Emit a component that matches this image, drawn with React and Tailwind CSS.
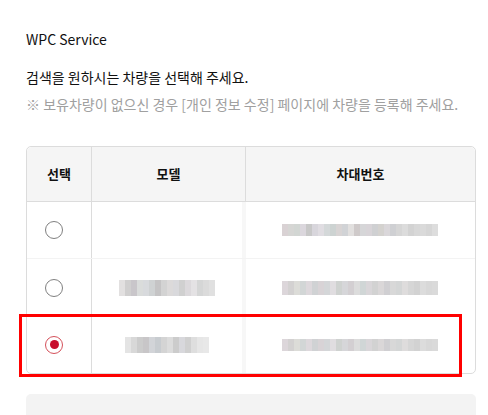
import React from "react";

function Mosaic({ cells, h = "h-[12px]" }) {
  return (
    <div className={`flex ${h}`}>
      {cells.map((c, i) => (
        <div key={i} className={`w-[6px] h-full ${c}`} />
      ))}
    </div>
  );
}

const chassisA = [
  "bg-[#d9d2d4]", "bg-[#d6d6d4]", "bg-[#d2d6d3]", "bg-[#dbd7dd]", "bg-[#c8c8c8]", "bg-[#d8d6dc]", "bg-[#e0dde2]",
  "bg-[#d4d8d9]", "bg-[#cdd3d2]", "bg-[#d8d4d4]", "bg-[#d1d3d6]", "bg-[#e2e0df]", "bg-[#cfcaca]", "bg-[#d6d6d8]",
  "bg-[#d8d4d8]", "bg-[#cfd0d2]", "bg-[#d4d2cf]", "bg-[#dad7da]", "bg-[#cfd0d3]", "bg-[#d6d6d6]", "bg-[#dcdcdc]",
  "bg-[#d3d3d3]", "bg-[#d8d8d8]", "bg-[#dadada]", "bg-[#d6d6d6]", "bg-[#dddddd]",
];
const chassisB = [
  "bg-[#dcd6da]", "bg-[#d3d1d1]", "bg-[#dcdcd8]", "bg-[#d2d6d6]", "bg-[#ddd8dc]", "bg-[#d0d2d4]", "bg-[#d8d3d6]",
  "bg-[#d4d6d8]", "bg-[#e0dde0]", "bg-[#cfd2d0]", "bg-[#d6d6d9]", "bg-[#d3cfd2]", "bg-[#dcdcdc]", "bg-[#d0d6d6]",
  "bg-[#d9d6d9]", "bg-[#d2d2d2]", "bg-[#dad7d8]", "bg-[#d0cfd2]", "bg-[#d8d8d8]", "bg-[#d4d6d6]", "bg-[#dedcdc]",
  "bg-[#d6d6d6]", "bg-[#d2d2d2]", "bg-[#dcdcdc]", "bg-[#d8d8d8]", "bg-[#dadada]",
];
const modelA = [
  "bg-[#e2e0e0]", "bg-[#d0cfcf]", "bg-[#c9c6ca]", "bg-[#dadcdb]", "bg-[#d8dadd]", "bg-[#cfd2d3]", "bg-[#c5c4c5]",
  "bg-[#d3d3d3]", "bg-[#dcdada]", "bg-[#d9d9dc]", "bg-[#d0d0d0]", "bg-[#dcd9dc]", "bg-[#e4e2e4]", "bg-[#d5d6d6]",
  "bg-[#dbdbdb]", "bg-[#e0e0e0]",
];
const modelB = [
  "bg-[#e4e4e4]", "bg-[#d8d8d8]", "bg-[#cccccc]", "bg-[#c8c6c8]", "bg-[#d2d4d8]", "bg-[#c8ccd0]", "bg-[#d4d4d4]",
  "bg-[#dcdcdc]", "bg-[#cccccc]", "bg-[#d8d8dc]", "bg-[#d0d0d0]", "bg-[#dedede]", "bg-[#e6e6e6]", "bg-[#e8e8e8]",
];

function Radio({ checked }) {
  if (checked) {
    return (
      <div className="w-[18px] h-[18px] mr-[10px] rounded-full border border-[#d4505a] flex items-center justify-center bg-white">
        <div className="w-[9px] h-[9px] rounded-full bg-[#c8102e]" />
      </div>
    );
  }
  return <div className="w-[18px] h-[18px] mr-[10px] rounded-full border border-[#808080] bg-white" />;
}

export default function App() {
  return (
    <div
      className="w-[488px] h-[415px] overflow-hidden bg-white pl-[26px] pt-[29px] text-[#111]"
      style={{ fontFamily: '"Noto Sans CJK KR", "Noto Sans", sans-serif' }}
    >
      <div className="text-[14px] leading-[20px] text-[#111]">WPC Service</div>
      <div className="mt-[18px] text-[14px] leading-[20px] text-[#111]">
        검색을 원하시는 차량을 선택해 주세요.
      </div>
      <div className="mt-[7px] text-[14px] leading-[20px] text-[#a0a0a0]">
        ※ 보유차량이 없으신 경우 [개인 정보 수정] 페이지에 차량을 등록해 주세요.
      </div>

      <div className="mt-[32px] w-[450px] border border-[#dcdcdc] rounded-[5px] relative">
        <div className="grid grid-cols-[65px_154px_1fr] h-[55px] bg-[#f5f5f5] rounded-t-[5px] border-b border-[#dcdcdc] text-[13px] font-bold text-[#111]">
          <div className="flex items-center justify-center border-r border-[#dcdcdc]">선택</div>
          <div className="flex items-center justify-center border-r border-[#dcdcdc]">모델</div>
          <div className="flex items-center justify-center">차대번호</div>
        </div>
        <div className="grid grid-cols-[65px_154px_1fr] h-[57px] border-b border-[#f3f3f3]">
          <div className="flex items-center justify-center border-r border-[#dcdcdc]">
            <Radio />
          </div>
          <div className="border-r-[4px] border-[#f7f7f7]" />
          <div className="flex items-center justify-center pr-[2px]">
            <Mosaic cells={chassisA} />
          </div>
        </div>
        <div className="grid grid-cols-[65px_154px_1fr] h-[57px]">
          <div className="flex items-center justify-center border-r border-[#dcdcdc]">
            <Radio />
          </div>
          <div className="flex items-center justify-center border-r-[4px] border-[#f7f7f7]">
            <Mosaic cells={modelA} h="h-[16px]" />
          </div>
          <div className="flex items-center justify-center pr-[2px]">
            <Mosaic cells={chassisB} h="h-[14px]" />
          </div>
        </div>
        <div className="grid grid-cols-[65px_154px_1fr] h-[57px] relative">
          <div className="flex items-center justify-center border-r border-[#dcdcdc]">
            <Radio checked />
          </div>
          <div className="flex items-center justify-center border-r-[4px] border-[#f7f7f7]">
            <Mosaic cells={modelB} h="h-[16px]" />
          </div>
          <div className="flex items-center justify-center pr-[2px]">
            <Mosaic cells={chassisB} />
          </div>
          <div className="absolute -left-[8px] -top-[2px] w-[443px] h-[63px] border-[3px] border-[#ff0000] pointer-events-none" />
        </div>
      </div>

      <div className="mt-[20px] w-[450px] h-[60px] bg-[#f3f3f3] rounded-[5px]" />
    </div>
  );
}
